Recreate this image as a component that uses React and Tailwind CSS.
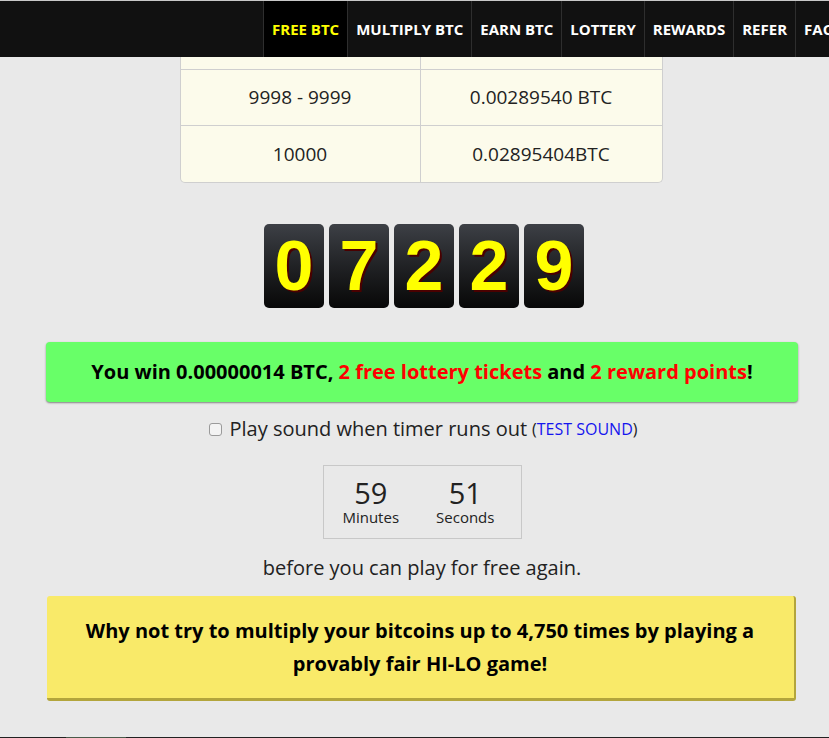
import React from "react";

const navItems = [
  { label: "FREE BTC", active: true },
  { label: "MULTIPLY BTC" },
  { label: "EARN BTC" },
  { label: "LOTTERY" },
  { label: "REWARDS" },
  { label: "REFER" },
  { label: "FAQ" },
];

const rows = [
  ["9998 - 9999", "0.00289540 BTC"],
  ["10000", "0.02895404BTC"],
];

const digits = ["0", "7", "2", "2", "9"];

const condensed = {
  fontFamily: "'Open Sans', sans-serif",
  fontStretch: "93%",
};

export default function App() {
  return (
    <div className="min-h-screen w-[829px] h-[738px] overflow-hidden bg-[#e9e9e9] font-['Open_Sans',sans-serif] text-[#222] border-t border-[#c8c8c8]">
      {/* top nav */}
      <nav className="flex h-[56px] bg-[#111111] overflow-hidden whitespace-nowrap">
        <div className="w-[263px] shrink-0" />
        {navItems.map((item) => (
          <div
            key={item.label}
            className={
              "flex items-center shrink-0 border-l border-[#2e2e2e] px-[8px] text-[15px] font-bold " +
              (item.active ? "bg-black text-[#ffff00]" : "text-white")
            }
          >
            {item.label}
          </div>
        ))}
      </nav>

      <div className="ml-[46px] w-[752px] flex flex-col items-center">
        {/* payout table */}
        <div className="w-[483px] ml-[-2px] bg-[#fcfbeb] border-x border-b border-[#cfcfcf] rounded-b-[5px] text-[19px]">
          <div className="flex h-[13px] border-b border-[#cfcfcf]">
            <div className="w-[240px] border-r border-[#cfcfcf]" />
            <div className="flex-1" />
          </div>
          {rows.map((r, i) => (
            <div
              key={i}
              className={"flex h-[56px] " + (i < rows.length - 1 ? "border-b border-[#cfcfcf]" : "")}
            >
              <div className="w-[240px] border-r border-[#cfcfcf] flex items-center justify-center">{r[0]}</div>
              <div className="flex-1 flex items-center justify-center">{r[1]}</div>
            </div>
          ))}
        </div>

        {/* roll result */}
        <div className="flex gap-[5px] mt-[41px] ml-[4px]">
          {digits.map((d, i) => (
            <div
              key={i}
              className="w-[60px] h-[84px] rounded-[5px] bg-linear-to-b from-[#3d4046] to-[#080808] flex items-center justify-center"
            >
              <span className="font-['Liberation_Sans',Arial,sans-serif] font-bold text-[70px] leading-none text-[#ffff00] [text-shadow:2px_2px_0_#4a0000]">
                {d}
              </span>
            </div>
          ))}
        </div>

        {/* win message */}
        <div className="w-[752px] h-[60px] mt-[34px] rounded-[4px] bg-[#68ff68] shadow-[0_1px_2px_rgba(0,0,0,0.45)] flex items-center justify-center">
          <p className="font-bold text-[20px] text-black" style={condensed}>
            You win 0.00000014 BTC, <span className="text-[#ff0000]">2 free lottery tickets</span> and{" "}
            <span className="text-[#ff0000]">2 reward points</span>!
          </p>
        </div>

        {/* sound option */}
        <div className="mt-[12px] flex items-center h-[30px] ml-[2px]">
          <span className="w-[13px] h-[13px] rounded-[3px] border border-[#9a9a9a] bg-[#f3f3f3] mr-[8px]" />
          <span className="text-[20px]">Play sound when timer runs out</span>
          <span className="text-[16px] ml-[5px]">
            (<span className="text-[#1515ee]">TEST SOUND</span>)
          </span>
        </div>

        {/* countdown */}
        <div className="mt-[21px] w-[199px] h-[74px] border border-[#c8c8c8] flex justify-center pr-[8px] pt-[10px]">
          <div className="w-[95px] flex flex-col items-center">
            <span className="text-[29px] leading-[34px]">59</span>
            <span className="text-[15px] leading-[14px]">Minutes</span>
          </div>
          <div className="w-[95px] flex flex-col items-center">
            <span className="text-[29px] leading-[34px]">51</span>
            <span className="text-[15px] leading-[14px]">Seconds</span>
          </div>
        </div>

        <p className="mt-[14px] text-[20px] leading-[30px]">before you can play for free again.</p>

        {/* promo */}
        <div className="mt-[13px] w-[749px] ml-[-2px] h-[105px] bg-[#f9ea69] border-r-[2px] border-b-[3px] border-[#b3a53c] rounded-[3px] flex items-center justify-center px-[34px]">
          <p className="font-bold text-[20px] leading-[33px] text-center text-black" style={condensed}>
            Why not try to multiply your bitcoins up to 4,750 times by playing a provably fair HI-LO game!
          </p>
        </div>
      </div>

      {/* footer edge */}
      <div className="mt-[36px] h-[2px] bg-[#222] flex">
        <div className="ml-[66px] w-[60px] bg-[#4a5a4a]" />
      </div>
    </div>
  );
}
